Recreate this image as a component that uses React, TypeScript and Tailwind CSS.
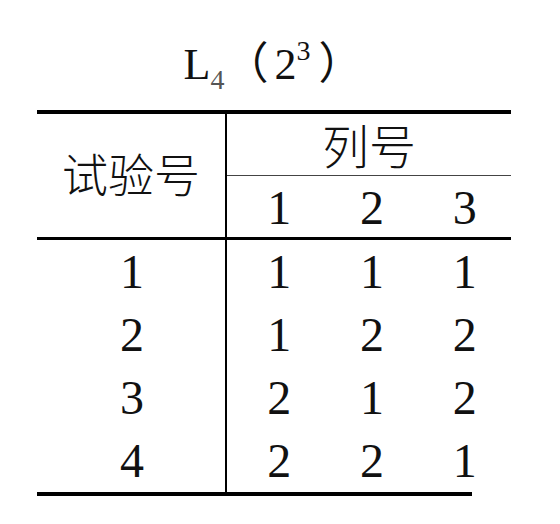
const serif = "font-['Liberation_Serif','Noto_Sans_CJK_SC',serif]";

const rows = [
    { id: 1, cols: [1, 1, 1] },
    { id: 2, cols: [1, 2, 2] },
    { id: 3, cols: [2, 1, 2] },
    { id: 4, cols: [2, 2, 1] },
];

const App = () => {
    return (
        <div className={`w-[560px] h-[524px] bg-white text-[#111] ${serif}`}>
            {/* title */}
            <div className="h-[110px] flex items-end justify-center pb-[23px] pr-[14px]">
                <div className="flex items-baseline text-[44px] leading-none">
                    <span>L</span>
                    <span className="text-[28px] text-[#555] relative top-[10px]">4</span>
                    <span className="mr-[6px]">（</span>
                    <span>2</span>
                    <span className="text-[28px] relative -top-[19px]">3</span>
                    <span className="ml-[8px]">）</span>
                </div>
            </div>

            <div className="ml-[37px] w-[474px]">
                <div className="h-[4px] bg-black" />

                {/* header */}
                <div className="flex h-[123px]">
                    <div className="w-[188px] flex items-center justify-center text-[46px] font-light leading-none pt-[2px]">
                        试验号
                    </div>
                    <div className="w-[2px] bg-black" />
                    <div className="flex-1 flex flex-col">
                        <div className="h-[61px] flex items-end justify-center pb-[3px] text-[47px] font-light leading-none">
                            列号
                        </div>
                        <div className="h-px bg-[#444]" />
                        <div className="flex-1 grid grid-cols-3 pl-[6px] items-center text-[48px] leading-none pt-[2px]">
                            <div className="text-center">1</div>
                            <div className="text-center">2</div>
                            <div className="text-center">3</div>
                        </div>
                    </div>
                </div>

                <div className="h-[3px] bg-black" />

                {/* body */}
                {rows.map((row) => (
                    <div key={row.id} className="flex h-[63px] text-[48px] leading-none">
                        <div className="w-[188px] flex items-center justify-center pl-[2px]">{row.id}</div>
                        <div className="w-[2px] bg-black" />
                        <div className="flex-1 grid grid-cols-3 pl-[6px] items-center">
                            {row.cols.map((v, i) => (
                                <div key={i} className="text-center">
                                    {v}
                                </div>
                            ))}
                        </div>
                    </div>
                ))}

                <div className="h-[4px] w-[435px] bg-black" />
            </div>
        </div>
    );
};

export default App;
